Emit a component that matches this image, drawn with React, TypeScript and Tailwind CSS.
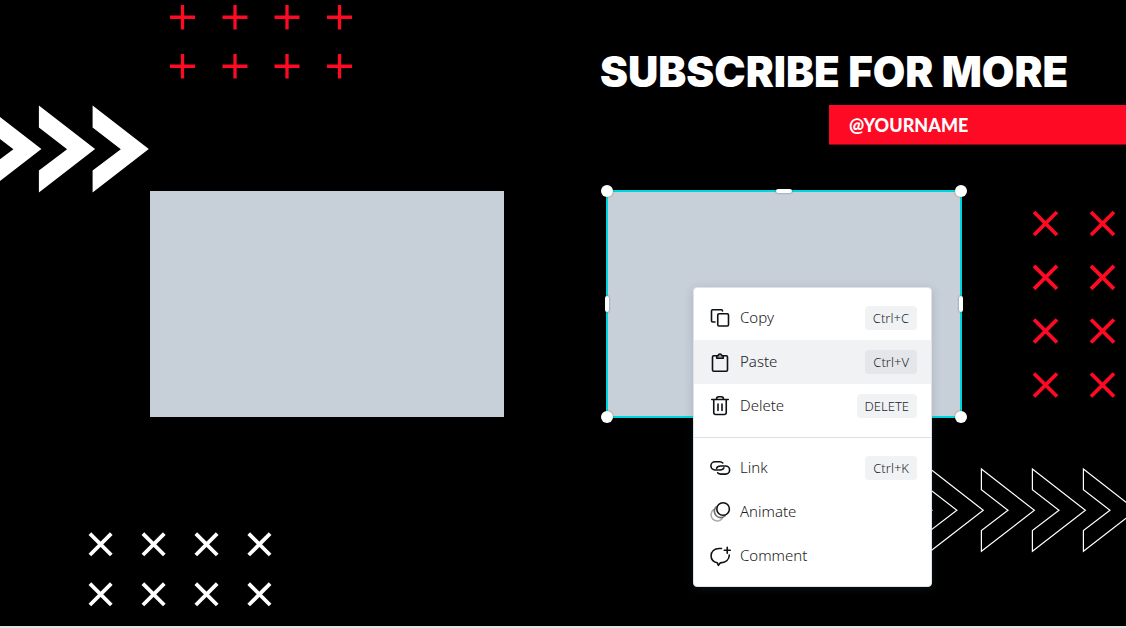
import type { ReactNode } from "react";

type MenuEntry = {
  label: string;
  icon: ReactNode;
  shortcut?: string;
  active?: boolean;
};

function Icon({ children }: { children: ReactNode }) {
  return (
    <svg
      className="size-6 shrink-0 text-[#0d1216]"
      viewBox="0 0 24 24"
      fill="none"
      stroke="currentColor"
      strokeWidth="1.6"
      strokeLinecap="round"
      strokeLinejoin="round"
      aria-hidden="true"
    >
      {children}
    </svg>
  );
}

const editEntries: MenuEntry[] = [
  {
    label: "Copy",
    shortcut: "Ctrl+C",
    icon: (
      <Icon>
        <rect x="9.75" y="7.75" width="10.75" height="12.25" rx="1.25" />
        <path d="M14.5 5v-.25a1 1 0 0 0-1-1H4.75c-.7 0-1.25.55-1.25 1.25v9.75c0 .7.55 1.25 1.25 1.25H7" />
      </Icon>
    ),
  },
  {
    label: "Paste",
    shortcut: "Ctrl+V",
    active: true,
    icon: (
      <Icon>
        <path d="M8.5 5.75H5.75c-.7 0-1.25.55-1.25 1.25v13c0 .7.55 1.25 1.25 1.25h12.5c.7 0 1.25-.55 1.25-1.25V7c0-.7-.55-1.25-1.25-1.25H15.5" />
        <path d="M8.75 8.25v-2.5h1.5a1.75 1.75 0 0 1 3.5 0h1.5v2.5z" fill="#a4a7aa" />
      </Icon>
    ),
  },
  {
    label: "Delete",
    shortcut: "DELETE",
    icon: (
      <Icon>
        <path d="M3.75 5.5h16.5M8.5 5.25c0-1.5.9-2.5 2.25-2.5h2.5c1.35 0 2.25 1 2.25 2.5M5.75 5.75V18.5c0 1.1.9 2 2 2h8.500a2 2 0 0 0 2-2V5.75M10 10v6.5M14 10v6.5" />
      </Icon>
    ),
  },
];

const extraEntries: MenuEntry[] = [
  {
    label: "Link",
    shortcut: "Ctrl+K",
    icon: (
      <Icon>
        <path d="M14.800 7A4.500 4.500 0 0 0 11.800 5.750H7a4.100 4.100 0 0 0 0 8.200h5c1.900 0 3.400-.8 3.900-2.200" />
        <path d="M9.700 16.900a4.500 4.500 0 0 0 3 1.250h4.800a4.100 4.100 0 0 0 0-8.200h-5c-1.900 0-3.400.8-3.900 2.200" />
      </Icon>
    ),
  },
  {
    label: "Animate",
    icon: (
      <Icon>
        <path d="M5.6 9.6a6.3 6.3 0 1 0 8.8 8.8" opacity=".35" />
        <path d="M8.2 6.8a6.3 6.3 0 1 0 9 9" opacity=".6" />
        <circle cx="15.1" cy="9" r="6.3" />
      </Icon>
    ),
  },
  {
    label: "Comment",
    icon: (
      <Icon>
        <path d="M13.5 4.5H11c-4.600 0-7.900 3-7.900 7.200 0 3.500 2.300 6.200 6.100 7l1.200 2.600 1.800-2.400c5.500-.2 9.100-3.200 9.100-7.900" />
        <path d="M19.250 3.200v6M16.250 6.200h6" />
      </Icon>
    ),
  },
];

function MenuItem({ label, icon, shortcut, active }: MenuEntry) {
  return (
    <li>
      <button
        type="button"
        className={
          active
            ? "flex h-11 w-full items-center gap-2 bg-[#f1f2f4] px-3.5 text-left"
            : "flex h-11 w-full items-center gap-2 px-3.5 text-left"
        }
      >
        {icon}
        <span className="grow pb-0.5 text-[15px] leading-5 font-light text-[#1b2024]">{label}</span>
        {shortcut && (
          <kbd
            className={
              active
                ? "rounded bg-[#e5e6e9] px-2 font-['Noto_Sans',sans-serif] text-[13px] leading-6 font-light text-[#23282d]"
                : "rounded bg-[#f1f2f4] px-2 font-['Noto_Sans',sans-serif] text-[13px] leading-6 font-light text-[#23282d]"
            }
          >
            {shortcut}
          </kbd>
        )}
      </button>
    </li>
  );
}

function ContextMenu() {
  return (
    <nav
      aria-label="Element actions"
      className="absolute top-[287px] left-[693px] w-[239px] rounded border border-[#dfe2e6] bg-white py-2 font-['Noto_Sans',sans-serif] shadow-[0_2px_10px_rgba(64,80,95,0.2)]"
    >
      <ul>
        {editEntries.map((entry) => (
          <MenuItem key={entry.label} {...entry} />
        ))}
      </ul>
      <hr className="mt-[9px] mb-2 border-t border-[#dcdfe2]" />
      <ul>
        {extraEntries.map((entry) => (
          <MenuItem key={entry.label} {...entry} />
        ))}
      </ul>
    </nav>
  );
}

function Marks({
  className,
  width,
  height,
  xs,
  ys,
  shape,
  stroke,
}: {
  className: string;
  width: number;
  height: number;
  xs: number[];
  ys: number[];
  shape: string;
  stroke: number;
}) {
  return (
    <svg
      className={className}
      width={width}
      height={height}
      fill="none"
      stroke="currentColor"
      strokeWidth={stroke}
      aria-hidden="true"
    >
      {ys.flatMap((y) =>
        xs.map((x) => <path key={`${x}-${y}`} d={`M${x} ${y}${shape}`} />),
      )}
    </svg>
  );
}

function Selection() {
  const circle = "size-3 rounded-full bg-white shadow-[0_0_2px_rgba(0,0,0,0.4)]";
  const bar = "rounded-full bg-white shadow-[0_0_2px_rgba(0,0,0,0.5)]";
  return (
    <div className="absolute top-[190px] left-[606px] h-[228px] w-[356px] border-2 border-[#00d4dd] bg-[#c7cfd9]">
      <div className="absolute -inset-[7px] flex flex-col justify-between">
        <div className="flex items-center justify-between">
          <span className={circle} />
          <span className={`${bar} h-1 w-4`} />
          <span className={circle} />
        </div>
        <div className="flex justify-between px-1">
          <span className={`${bar} h-4 w-1`} />
          <span className={`${bar} h-4 w-1`} />
        </div>
        <div className="flex justify-between">
          <span className={circle} />
          <span className={circle} />
        </div>
      </div>
    </div>
  );
}

export default function App() {
  return (
    <div className="flex min-h-screen flex-col bg-[#e1e3e8]">
      <main className="relative mb-0.5 grow overflow-hidden bg-black">
        <Marks
          className="absolute top-0 left-[165px] text-[#ff0a24]"
          width={192}
          height={84}
          xs={[17.5, 70, 122, 174.5]}
          ys={[17.25, 66.25]}
          shape="m-12.5 0h25m-12.500-12.250v24.500"
          stroke={3.3}
        />
        <Marks
          className="absolute top-[205px] left-[1028px] text-[#ff0a24]"
          width={96}
          height={200}
          xs={[17.5, 74.5]}
          ys={[18.5, 72.3, 126, 180]}
          shape="m-11.500-11.500l23 23m0-23l-23 23"
          stroke={3.8}
        />
        <Marks
          className="absolute top-[526px] left-[84px] text-white"
          width={192}
          height={88}
          xs={[16.6, 69.6, 122.5, 175.4]}
          ys={[18.3, 68.3]}
          shape="m-10.700-10.700l21.400 21.400m0-21.400l-21.400 21.400"
          stroke={3.8}
        />

        <svg
          className="absolute top-[100px] left-0 text-white"
          width="156"
          height="98"
          fill="currentColor"
          aria-hidden="true"
        >
          {[-14.8, 38.9, 92.6].map((x) => (
            <path key={x} d={`M${x} 5.500l56.200 43.500l-56.200 43.500v-22l28.200-21.300l-28.200-21.700z`} />
          ))}
        </svg>
        <svg
          className="absolute top-[460px] left-[870px] text-white"
          width="256"
          height="100"
          fill="none"
          stroke="currentColor"
          strokeWidth="1.2"
          aria-hidden="true"
        >
          {[9, 60.3, 111.4, 162.4, 213.4].map((x) => (
            <path key={x} d={`M${x} 9l53 41.300l-53 41v-20.800l26.600-20.200l-26.600-20.500z`} />
          ))}
        </svg>

        <h1 className="absolute top-[47px] left-[600px] font-['Inter',sans-serif] text-[42px] leading-[50px] font-black whitespace-nowrap text-white">
          SUBSCRIBE FOR MORE
        </h1>
        <p className="absolute top-[105px] right-0 left-[829px] border-b border-[#8f0514] bg-[#ff0a24] px-5 pt-px font-['Lato',sans-serif] text-lg leading-[38px] font-black text-white">
          @YOURNAME
        </p>

        <div className="absolute top-[191px] left-[150px] h-[226px] w-[354px] bg-[#c7cfd9]" />
        <Selection />
        <ContextMenu />
      </main>
    </div>
  );
}
